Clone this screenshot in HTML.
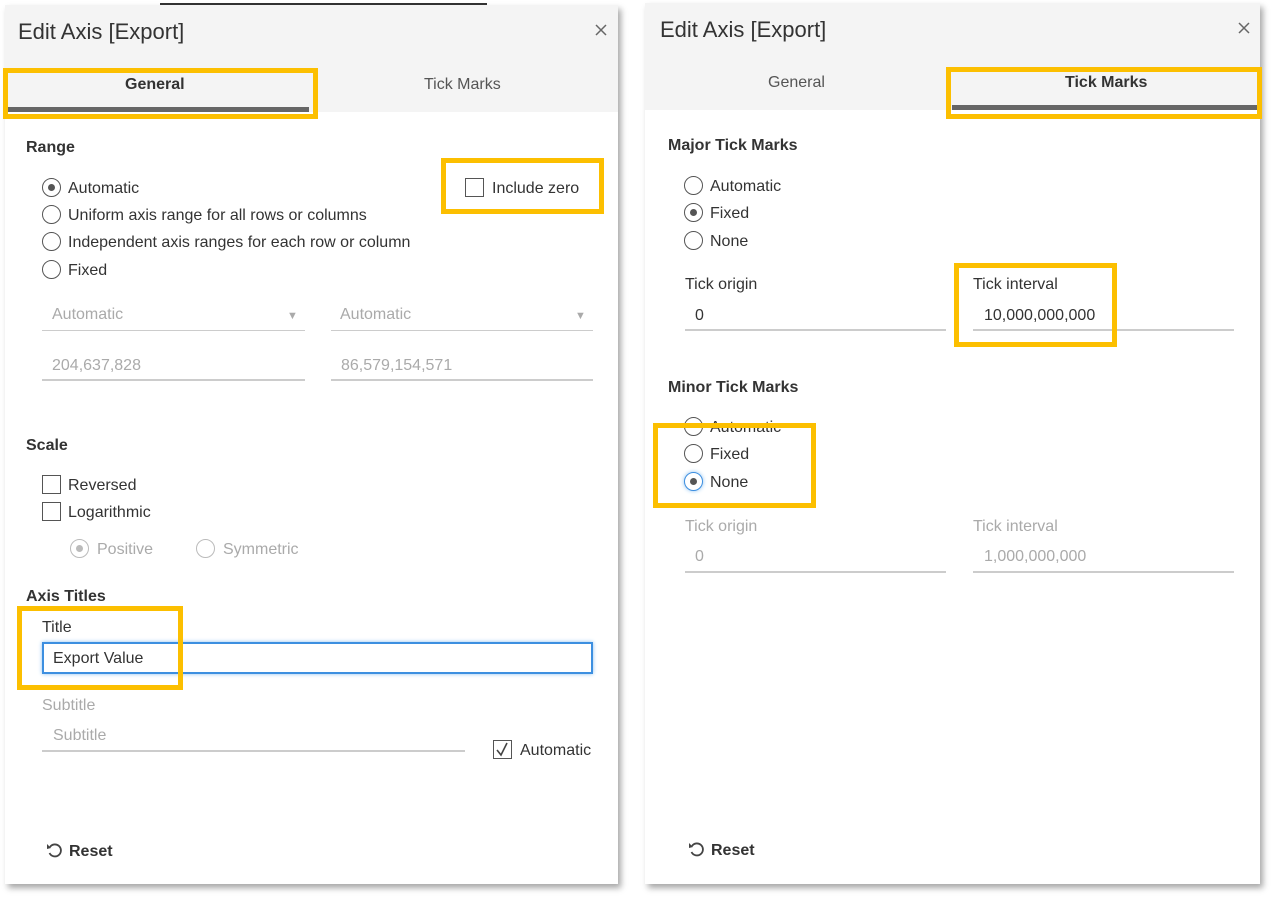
<!DOCTYPE html>
<html><head><style>
*{margin:0;padding:0;box-sizing:border-box}
body{width:1274px;height:898px;background:#fff;position:relative;overflow:hidden;font-family:"Liberation Sans",sans-serif;color:#333;font-size:16px}
.a{position:absolute;white-space:nowrap;line-height:18px;margin-top:2px}
.p{position:absolute;background:#fff;box-shadow:3px 4px 6px rgba(0,0,0,.35)}
.hd{position:absolute;background:#f4f4f4}
.b{font-weight:bold}
.g{color:#aaa}
.r{position:absolute;width:19px;height:19px;border:1.6px solid #555;border-radius:50%;background:#fff}
.r.on::after{content:"";position:absolute;left:4.5px;top:4.5px;width:7px;height:7px;border-radius:50%;background:#555}
.r.gr{border-color:#bbb}.r.gr.on::after{background:#bbb}
.c{position:absolute;width:19px;height:19px;border:1.6px solid #555;background:#fff}
.ln{position:absolute;height:2px;background:#ccc}
.y{position:absolute;border:5px solid #fcbf00}
.ul{position:absolute;height:5px;background:#666}
</style></head><body>
<div style="position:absolute;left:160px;top:3px;width:327px;height:3px;background:#333"></div>
<!-- LEFT -->
<div class="p" style="left:5px;top:5px;width:613px;height:879px"></div>
<div class="hd" style="left:5px;top:5px;width:613px;height:107px"></div>
<div class="a" style="left:18px;top:17px;font-size:22px;line-height:26px">Edit Axis [Export]</div>
<svg style="position:absolute;left:595px;top:24px" width="12" height="12"><path d="M1 1L11 11M11 1L1 11" stroke="#666" stroke-width="1.5"/></svg>
<div class="a b" style="left:125px;top:74px">General</div>
<div class="a" style="left:424px;top:74px;color:#555">Tick Marks</div>
<div class="ul" style="left:7px;top:107px;width:302px"></div>
<div class="a b" style="left:26px;top:137px">Range</div>
<div class="r on" style="left:42px;top:178px"></div><div class="a" style="left:68px;top:178px">Automatic</div>
<div class="r" style="left:42px;top:205px"></div><div class="a" style="left:68px;top:205px">Uniform axis range for all rows or columns</div>
<div class="r" style="left:42px;top:232px"></div><div class="a" style="left:68px;top:232px">Independent axis ranges for each row or column</div>
<div class="r" style="left:42px;top:260px"></div><div class="a" style="left:68px;top:260px">Fixed</div>
<div class="c" style="left:465px;top:178px"></div><div class="a" style="left:492px;top:178px">Include zero</div>
<div class="a g" style="left:52px;top:304px">Automatic</div><div class="a g" style="left:287px;top:305px;font-size:11px">▼</div><div class="ln" style="left:42px;top:330px;width:263px;height:1px"></div>
<div class="a g" style="left:340px;top:304px">Automatic</div><div class="a g" style="left:575px;top:305px;font-size:11px">▼</div><div class="ln" style="left:331px;top:330px;width:262px;height:1px"></div>
<div class="a g" style="left:52px;top:355px">204,637,828</div><div class="ln" style="left:42px;top:379px;width:263px"></div>
<div class="a g" style="left:341px;top:355px">86,579,154,571</div><div class="ln" style="left:331px;top:379px;width:262px"></div>
<div class="a b" style="left:26px;top:435px">Scale</div>
<div class="c" style="left:42px;top:475px"></div><div class="a" style="left:68px;top:475px">Reversed</div>
<div class="c" style="left:42px;top:502px"></div><div class="a" style="left:68px;top:502px">Logarithmic</div>
<div class="r gr on" style="left:70px;top:539px"></div><div class="a g" style="left:97px;top:539px">Positive</div>
<div class="r gr" style="left:196px;top:539px"></div><div class="a g" style="left:223px;top:539px">Symmetric</div>
<div class="a b" style="left:26px;top:586px">Axis Titles</div>
<div class="a" style="left:42px;top:617px">Title</div>
<div style="position:absolute;left:42px;top:642px;width:551px;height:32px;border:2px solid #3d8fe0;box-shadow:0 0 4px #8cc0f0"></div>
<div class="a" style="left:53px;top:648px">Export Value</div>
<div class="a g" style="left:42px;top:695px">Subtitle</div>
<div class="a g" style="left:53px;top:725px">Subtitle</div><div class="ln" style="left:42px;top:750px;width:423px"></div>
<div class="c" style="left:493px;top:740px"></div>
<svg style="position:absolute;left:493px;top:740px" width="19" height="19"><path d="M4 10L8 15L14 3" stroke="#444" stroke-width="1.6" fill="none"/></svg>
<div class="a" style="left:520px;top:740px">Automatic</div>
<svg style="position:absolute;left:46px;top:842px" width="16" height="17"><path d="M4 5A6 6 0 1 1 3.5 11" stroke="#444" stroke-width="1.8" fill="none"/><path d="M1 2L5 6L1 7Z" fill="#444"/></svg>
<div class="a b" style="left:69px;top:841px">Reset</div>
<div class="y" style="left:3px;top:68px;width:315px;height:51px"></div>
<div class="y" style="left:441px;top:158px;width:163px;height:56px"></div>
<div class="y" style="left:17px;top:606px;width:166px;height:84px"></div>
<!-- RIGHT -->
<div class="p" style="left:645px;top:3px;width:615px;height:881px"></div>
<div class="hd" style="left:645px;top:3px;width:615px;height:107px"></div>
<div class="a" style="left:660px;top:15px;font-size:22px;line-height:26px">Edit Axis [Export]</div>
<svg style="position:absolute;left:1238px;top:22px" width="12" height="12"><path d="M1 1L11 11M11 1L1 11" stroke="#666" stroke-width="1.5"/></svg>
<div class="a" style="left:768px;top:72px;color:#555">General</div>
<div class="a b" style="left:1065px;top:72px">Tick Marks</div>
<div class="ul" style="left:952px;top:105px;width:305px"></div>
<div class="a b" style="left:668px;top:135px">Major Tick Marks</div>
<div class="r" style="left:684px;top:176px"></div><div class="a" style="left:710px;top:176px">Automatic</div>
<div class="r on" style="left:684px;top:203px"></div><div class="a" style="left:710px;top:203px">Fixed</div>
<div class="r" style="left:684px;top:231px"></div><div class="a" style="left:710px;top:231px">None</div>
<div class="a" style="left:685px;top:274px">Tick origin</div><div class="a" style="left:695px;top:305px">0</div><div class="ln" style="left:685px;top:329px;width:261px"></div>
<div class="a" style="left:973px;top:274px">Tick interval</div><div class="a" style="left:984px;top:305px">10,000,000,000</div><div class="ln" style="left:973px;top:329px;width:261px"></div>
<div class="a b" style="left:668px;top:377px">Minor Tick Marks</div>
<div class="r" style="left:684px;top:417px"></div><div class="a" style="left:710px;top:417px">Automatic</div>
<div class="r" style="left:684px;top:444px"></div><div class="a" style="left:710px;top:444px">Fixed</div>
<div class="r on" style="left:684px;top:472px;border-color:#3d8fe0;box-shadow:0 0 4px #8cc0f0"></div><div class="a" style="left:710px;top:472px">None</div>
<div class="a g" style="left:685px;top:516px">Tick origin</div><div class="a g" style="left:695px;top:546px">0</div><div class="ln" style="left:685px;top:571px;width:261px"></div>
<div class="a g" style="left:973px;top:516px">Tick interval</div><div class="a g" style="left:984px;top:546px">1,000,000,000</div><div class="ln" style="left:973px;top:571px;width:261px"></div>
<svg style="position:absolute;left:688px;top:841px" width="16" height="17"><path d="M4 5A6 6 0 1 1 3.5 11" stroke="#444" stroke-width="1.8" fill="none"/><path d="M1 2L5 6L1 7Z" fill="#444"/></svg>
<div class="a b" style="left:711px;top:840px">Reset</div>
<div class="y" style="left:946px;top:67px;width:316px;height:52px"></div>
<div class="y" style="left:954px;top:263px;width:163px;height:84px"></div>
<div class="y" style="left:653px;top:423px;width:163px;height:85px"></div>
</body></html>
